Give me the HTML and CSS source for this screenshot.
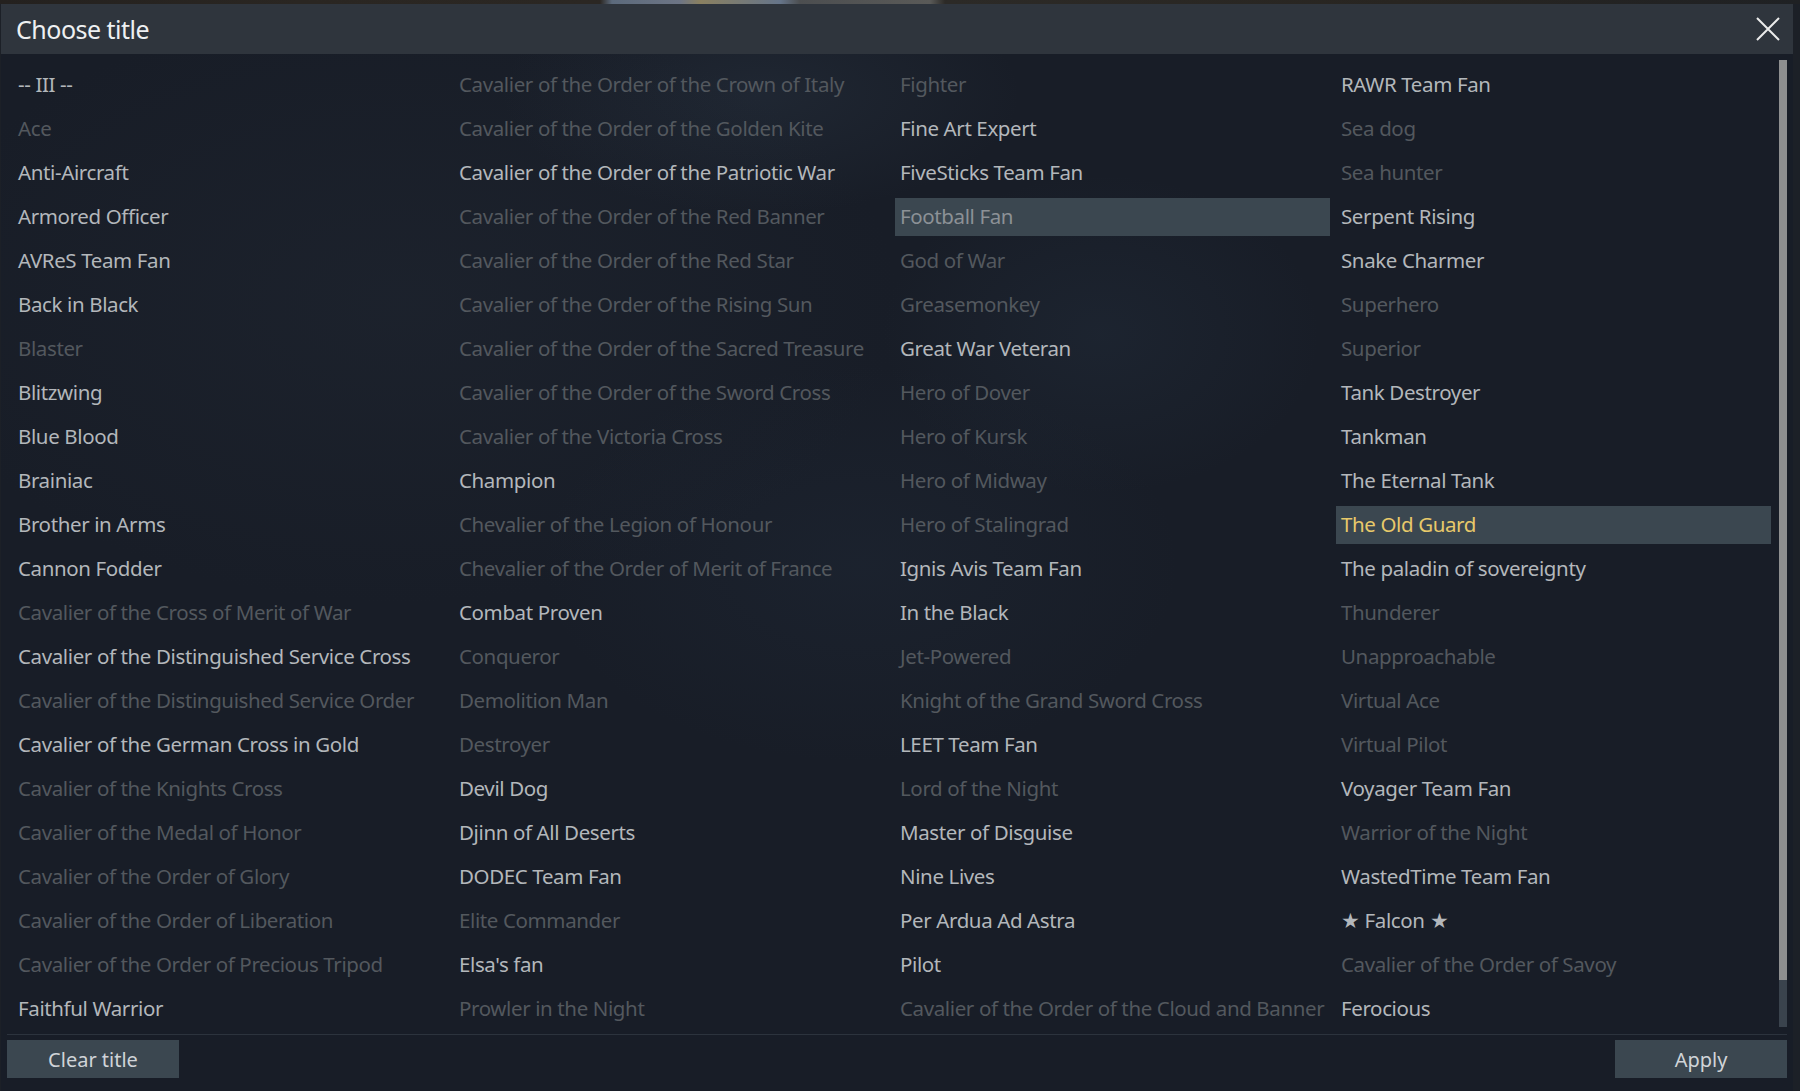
FILE: index.html
```html
<!DOCTYPE html>
<html lang="en">

<head>
    <meta charset="UTF-8">
    <meta name="viewport" content="width=device-width, initial-scale=1.0">
    <title>Choose title</title>
    <link rel="stylesheet" href="styles.css">
</head>

<body>
    <div class="backdrop"></div>

    <div class="dialog">
        <div class="dialog-header">
            <h1>Choose title</h1>
            <button class="close-btn" title="Close">
                <svg width="24" height="24" viewBox="0 0 24 24">
                    <path d="M1 1 L23 23 M23 1 L1 23" stroke="#ececec" stroke-width="2" fill="none" />
                </svg>
            </button>
        </div>

        <div class="dialog-body">
            <ul class="title-list">
                <!-- column 1 -->
                <li>-- III --</li>
                <li class="locked">Ace</li>
                <li>Anti-Aircraft</li>
                <li>Armored Officer</li>
                <li>AVReS Team Fan</li>
                <li>Back in Black</li>
                <li class="locked">Blaster</li>
                <li>Blitzwing</li>
                <li>Blue Blood</li>
                <li>Brainiac</li>
                <li>Brother in Arms</li>
                <li>Cannon Fodder</li>
                <li class="locked">Cavalier of the Cross of Merit of War</li>
                <li>Cavalier of the Distinguished Service Cross</li>
                <li class="locked">Cavalier of the Distinguished Service Order</li>
                <li>Cavalier of the German Cross in Gold</li>
                <li class="locked">Cavalier of the Knights Cross</li>
                <li class="locked">Cavalier of the Medal of Honor</li>
                <li class="locked">Cavalier of the Order of Glory</li>
                <li class="locked">Cavalier of the Order of Liberation</li>
                <li class="locked">Cavalier of the Order of Precious Tripod</li>
                <li>Faithful Warrior</li>

                <!-- column 2 -->
                <li class="locked">Cavalier of the Order of the Crown of Italy</li>
                <li class="locked">Cavalier of the Order of the Golden Kite</li>
                <li>Cavalier of the Order of the Patriotic War</li>
                <li class="locked">Cavalier of the Order of the Red Banner</li>
                <li class="locked">Cavalier of the Order of the Red Star</li>
                <li class="locked">Cavalier of the Order of the Rising Sun</li>
                <li class="locked">Cavalier of the Order of the Sacred Treasure</li>
                <li class="locked">Cavalier of the Order of the Sword Cross</li>
                <li class="locked">Cavalier of the Victoria Cross</li>
                <li>Champion</li>
                <li class="locked">Chevalier of the Legion of Honour</li>
                <li class="locked">Chevalier of the Order of Merit of France</li>
                <li>Combat Proven</li>
                <li class="locked">Conqueror</li>
                <li class="locked">Demolition Man</li>
                <li class="locked">Destroyer</li>
                <li>Devil Dog</li>
                <li>Djinn of All Deserts</li>
                <li>DODEC Team Fan</li>
                <li class="locked">Elite Commander</li>
                <li>Elsa's fan</li>
                <li class="locked">Prowler in the Night</li>

                <!-- column 3 -->
                <li class="locked">Fighter</li>
                <li>Fine Art Expert</li>
                <li>FiveSticks Team Fan</li>
                <li class="locked hover">Football Fan</li>
                <li class="locked">God of War</li>
                <li class="locked">Greasemonkey</li>
                <li>Great War Veteran</li>
                <li class="locked">Hero of Dover</li>
                <li class="locked">Hero of Kursk</li>
                <li class="locked">Hero of Midway</li>
                <li class="locked">Hero of Stalingrad</li>
                <li>Ignis Avis Team Fan</li>
                <li>In the Black</li>
                <li class="locked">Jet-Powered</li>
                <li class="locked">Knight of the Grand Sword Cross</li>
                <li>LEET Team Fan</li>
                <li class="locked">Lord of the Night</li>
                <li>Master of Disguise</li>
                <li>Nine Lives</li>
                <li>Per Ardua Ad Astra</li>
                <li>Pilot</li>
                <li class="locked">Cavalier of the Order of the Cloud and Banner</li>

                <!-- column 4 -->
                <li>RAWR Team Fan</li>
                <li class="locked">Sea dog</li>
                <li class="locked">Sea hunter</li>
                <li>Serpent Rising</li>
                <li>Snake Charmer</li>
                <li class="locked">Superhero</li>
                <li class="locked">Superior</li>
                <li>Tank Destroyer</li>
                <li>Tankman</li>
                <li>The Eternal Tank</li>
                <li class="selected">The Old Guard</li>
                <li>The paladin of sovereignty</li>
                <li class="locked">Thunderer</li>
                <li class="locked">Unapproachable</li>
                <li class="locked">Virtual Ace</li>
                <li class="locked">Virtual Pilot</li>
                <li>Voyager Team Fan</li>
                <li class="locked">Warrior of the Night</li>
                <li>WastedTime Team Fan</li>
                <li>★ Falcon ★</li>
                <li class="locked">Cavalier of the Order of Savoy</li>
                <li>Ferocious</li>
            </ul>

            <div class="scrollbar">
                <div class="scroll-thumb"></div>
            </div>
        </div>

        <div class="dialog-footer">
            <button class="btn">Clear title</button>
            <button class="btn">Apply</button>
        </div>
    </div>
</body>

</html>
```

FILE: styles.css
```css
html,
body {
    margin: 0;
    height: 1091px;
    overflow: hidden;
}

body {
    font-family: "Noto Sans", "Open Sans", sans-serif;
    background-color: #1c2027;
}

/* blurred hangar scene peeking out above the dialog */
.backdrop {
    height: 4px;
    background: linear-gradient(90deg,
            #24211f 0px,
            #2a2622 300px,
            #2b2723 600px,
            #5c6a7c 612px,
            #6d7585 680px,
            #8a8060 700px,
            #66758a 780px,
            #4c4e50 800px,
            #5a5a58 930px,
            #2c2a27 945px,
            #282521 1400px,
            #1f2124 1800px);
}

.dialog {
    width: 1792px;
    height: 1087px;
    margin-left: 1px;
    display: flex;
    flex-direction: column;
    background-color: #181d27;
    background-image:
        radial-gradient(ellipse 260px 120px at 760px 90px, rgba(70, 90, 110, 0.16), transparent),
        radial-gradient(ellipse 220px 160px at 1100px 330px, rgba(60, 85, 110, 0.12), transparent),
        radial-gradient(ellipse 320px 200px at 860px 560px, rgba(50, 70, 95, 0.12), transparent),
        radial-gradient(ellipse 500px 300px at 400px 300px, rgba(40, 48, 60, 0.25), transparent);
}

.dialog-header {
    height: 50px;
    flex-shrink: 0;
    display: flex;
    align-items: center;
    justify-content: space-between;
    background-color: #2f353d;
    padding: 0 13px 0 15px;
}

.dialog-header h1 {
    margin: 0;
    font-size: 25px;
    font-weight: 400;
    color: #eef0f2;
    letter-spacing: -0.5px;
}

.close-btn {
    background: none;
    border: none;
    padding: 0;
    width: 24px;
    height: 24px;
    cursor: pointer;
}

.close-btn svg {
    display: block;
}

.dialog-body {
    height: 980px;
    flex-shrink: 0;
    display: flex;
}

.title-list {
    list-style: none;
    margin: 0;
    padding: 12px 0 0 12px;
    display: grid;
    grid-auto-flow: column;
    grid-template-rows: repeat(22, 38px);
    grid-auto-columns: 435px;
    row-gap: 6px;
    column-gap: 6px;
}

.title-list li {
    padding: 0 0 2px 5px;
    line-height: 36px;
    font-size: 20.5px;
    letter-spacing: -0.38px;
    white-space: nowrap;
    color: #b3b7bb;
}

.title-list li.locked {
    color: #53585e;
}

.title-list li.hover {
    background-color: #3b4750;
    color: #8c9196;
}

.title-list li.selected {
    background-color: #3b4750;
    color: #e8c96a;
}

.scrollbar {
    width: 8px;
    height: 967px;
    margin: 6px 6px 0 auto;
    background-color: #3a434d;
}

.scroll-thumb {
    height: 920px;
    background-color: #8e8f90;
}

.dialog-footer {
    margin: 0 6px;
    border-top: 1px solid #2c333d;
    padding-top: 5px;
    display: flex;
    justify-content: space-between;
}

.btn {
    width: 172px;
    height: 38px;
    border: none;
    background-color: #3b4750;
    color: #d0d4d8;
    font-family: "Noto Sans", "Open Sans", sans-serif;
    font-size: 20px;
    cursor: pointer;
}
```
